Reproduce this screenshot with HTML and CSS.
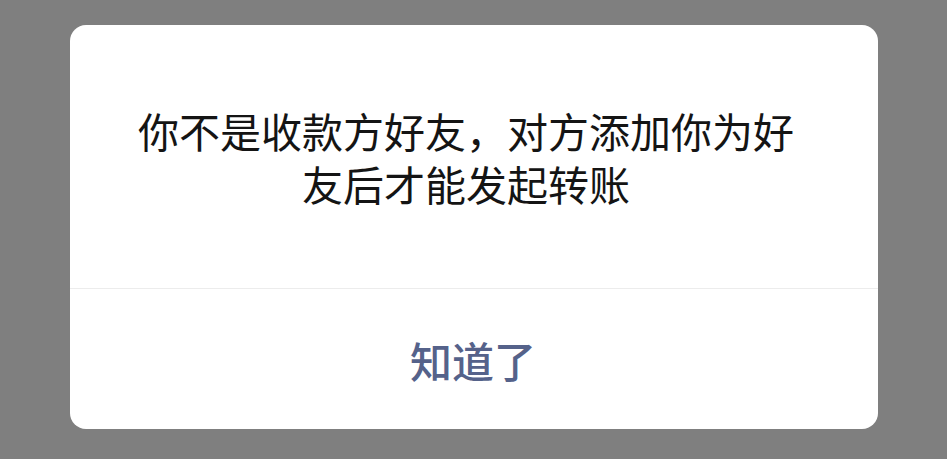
FILE: index.html
```html
<!DOCTYPE html>
<html lang="zh-CN">
<head>
    <meta charset="UTF-8">
    <meta name="viewport" content="width=device-width, initial-scale=1.0">
    <title>提示</title>
    <link rel="stylesheet" href="styles.css">
</head>
<body>
    <div class="dialog">
        <div class="dialog-body">
            <p class="dialog-msg">你不是收款方好友，对方添加你为好友后才能发起转账</p>
        </div>
        <div class="dialog-footer">
            <button type="button" class="dialog-btn">知道了</button>
        </div>
    </div>
</body>
</html>
```

FILE: styles.css
```css
html, body {
    height: 100%;
}
body {
    margin: 0;
    padding: 25px 69px 30px 70px;
    box-sizing: border-box;
    background-color: #7f7f7f;
    font-family: "Noto Sans CJK SC", "Noto Sans", sans-serif;
}
.dialog {
    height: 404px;
    background: white;
    border-radius: 16px;
    display: flex;
    flex-direction: column;
    overflow: hidden;
}
.dialog-body {
    height: 263px;
    padding: 0 76px 0 60px;
    display: flex;
    align-items: center;
    justify-content: center;
    box-sizing: border-box;
}
.dialog-msg {
    margin: 0;
    font-size: 41px;
    line-height: 53px;
    color: #141414;
    text-align: center;
}
.dialog-footer {
    flex: 1;
    border-top: 1px solid #ececec;
    display: flex;
}
.dialog-btn {
    flex: 1;
    border: none;
    background: none;
    padding: 0 2px 0 0;
    font-family: inherit;
    font-size: 42px;
    font-weight: 500;
    color: #55628a;
    cursor: pointer;
}
```
